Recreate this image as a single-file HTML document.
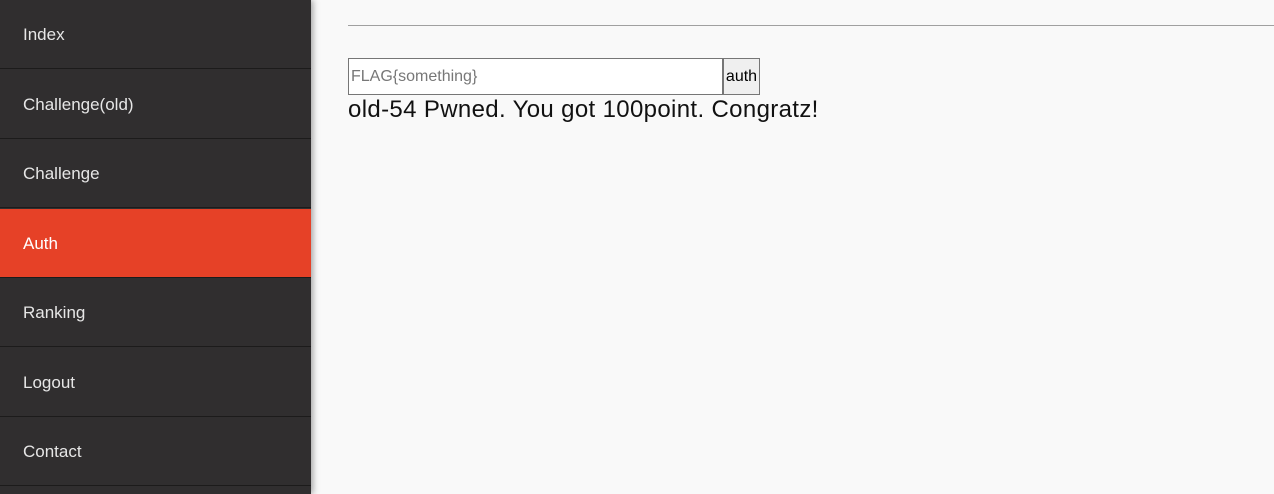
<!DOCTYPE html>
<html><head><style>
body{margin:0;width:1274px;height:494px;background:#f9f9f9;font-family:"Liberation Sans",sans-serif;overflow:hidden;position:relative}
.side{position:absolute;left:0;top:0;width:311px;height:494px;background:#302e2f;box-shadow:2px 0 6px rgba(0,0,0,.35)}
.it{position:absolute;left:0;width:311px;height:69px;border-bottom:1px solid #1c1b1b;color:#e6e6e6;font-size:17px;line-height:69px;padding-left:23px;box-sizing:border-box}
.act{background:#e64127;color:#fff}
hr{position:absolute;left:348px;top:25px;width:926px;margin:0;border:0;border-top:1px solid #a0a0a0}
.inp{position:absolute;left:348px;top:58px;width:375px;height:37px;box-sizing:border-box;border:1px solid #767676;background:#fff;font-size:16px;color:#777;line-height:35px;padding-left:2px}
.btn{position:absolute;left:723px;top:58px;width:37px;height:37px;box-sizing:border-box;border:1px solid #767676;background:#efefef;font-size:16px;line-height:35px;text-align:center;color:#000}
.msg{position:absolute;left:348px;top:96px;font-size:24px;letter-spacing:0.35px;color:#111}
</style></head><body>
<div class="side">
<div class="it" style="top:0">Index</div>
<div class="it" style="top:69.5px">Challenge(old)</div>
<div class="it" style="top:139px">Challenge</div>
<div class="it act" style="top:208.5px">Auth</div>
<div class="it" style="top:278px">Ranking</div>
<div class="it" style="top:347.5px">Logout</div>
<div class="it" style="top:417px">Contact</div>
</div>
<hr>
<div class="inp">FLAG{something}</div>
<div class="btn">auth</div>
<div class="msg">old-54 Pwned. You got 100point. Congratz!</div>
</body></html>
